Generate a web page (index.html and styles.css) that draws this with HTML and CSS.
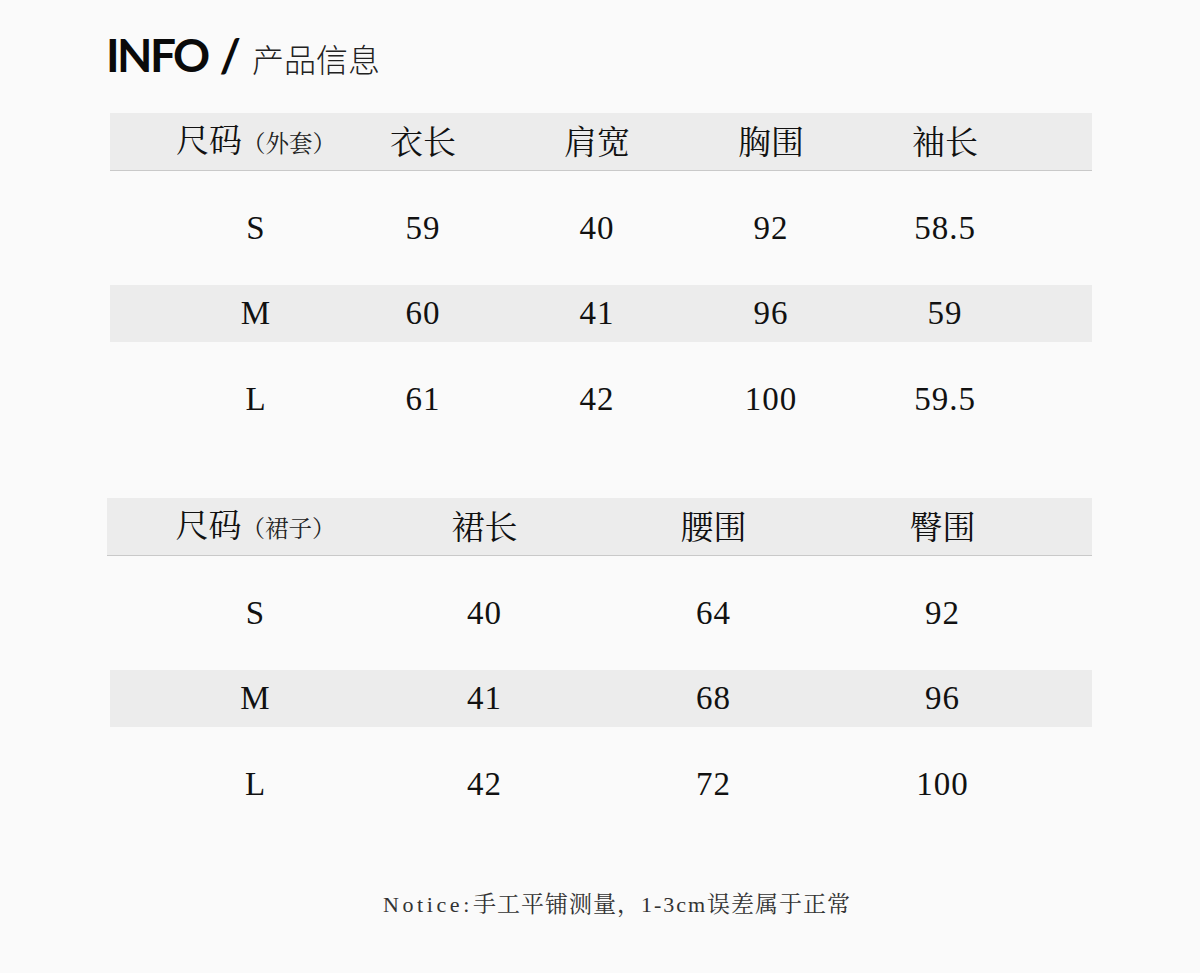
FILE: index.html
```html
<!DOCTYPE html>
<html lang="zh-CN">
<head>
<meta charset="utf-8">
<title>INFO / 产品信息</title>
<link rel="stylesheet" href="styles.css">
</head>
<body>
<main class="page">
  <h1 class="title"><span class="title-en">INFO</span><span class="title-slash">/</span><span class="title-cn">产品信息</span></h1>

  <section class="size-table coat">
    <div class="row head">
      <div class="cell">尺码<small>（外套）</small></div>
      <div class="cell">衣长</div>
      <div class="cell">肩宽</div>
      <div class="cell">胸围</div>
      <div class="cell">袖长</div>
    </div>
    <div class="row">
      <div class="cell num">S</div><div class="cell num">59</div><div class="cell num">40</div><div class="cell num">92</div><div class="cell num">58.5</div>
    </div>
    <div class="row shade">
      <div class="cell num">M</div><div class="cell num">60</div><div class="cell num">41</div><div class="cell num">96</div><div class="cell num">59</div>
    </div>
    <div class="row">
      <div class="cell num">L</div><div class="cell num">61</div><div class="cell num">42</div><div class="cell num">100</div><div class="cell num">59.5</div>
    </div>
  </section>

  <section class="size-table skirt">
    <div class="row head">
      <div class="cell">尺码<small>（裙子）</small></div>
      <div class="cell">裙长</div>
      <div class="cell">腰围</div>
      <div class="cell">臀围</div>
    </div>
    <div class="row">
      <div class="cell num">S</div><div class="cell num">40</div><div class="cell num">64</div><div class="cell num">92</div>
    </div>
    <div class="row shade">
      <div class="cell num">M</div><div class="cell num">41</div><div class="cell num">68</div><div class="cell num">96</div>
    </div>
    <div class="row">
      <div class="cell num">L</div><div class="cell num">42</div><div class="cell num">72</div><div class="cell num">100</div>
    </div>
  </section>

  <p class="notice"><span class="asc wide">Notice:</span><span class="cjk">手工平铺测量，</span><span class="asc">1-3cm</span><span class="cjk">误差属于正常</span></p>
</main>
</body>
</html>
```

FILE: styles.css
```css
html, body {
  margin: 0;
  padding: 0;
  background: #fafafa;
}

.page {
  width: 1200px;
  height: 973px;
  padding-top: 32px;
  box-sizing: border-box;
  color: #111;
  text-spacing-trim: space-all;
}

.title {
  margin: 0 0 0 106px;
  height: 46px;
  line-height: 46px;
  display: flex;
  align-items: baseline;
  font-weight: normal;
  white-space: nowrap;
}

.title-en {
  font-family: "Lato", "Open Sans", sans-serif;
  font-weight: 700;
  font-size: 46px;
  letter-spacing: -2.6px;
  color: #0a0a0a;
}

.title-slash {
  font-family: "Lato", "Open Sans", sans-serif;
  font-weight: 700;
  font-size: 46px;
  margin-left: 12px;
  color: #0a0a0a;
}

.title-cn {
  font-family: "Noto Sans CJK SC", sans-serif;
  font-weight: 300;
  font-size: 32px;
  margin-left: 11px;
  color: #222;
}

.size-table {
  margin-left: 110px;
  width: 982px;
}

.coat {
  margin-top: 35px;
}

.skirt {
  margin-top: 70.5px;
}

.row {
  display: grid;
  box-sizing: border-box;
  height: 57px;
  align-items: center;
  margin-top: 28.5px;
}

.coat .row {
  padding-left: 66px;
  grid-template-columns: 160px repeat(4, 174px);
}

.skirt .row {
  padding-left: 31px;
  grid-template-columns: repeat(4, 229px);
}

.row.head {
  margin-top: 0;
  height: 58px;
  background: #ececec;
  border-bottom: 1px solid #c9c9c9;
  padding-bottom: 7px;
}

.row.head .cell {
  line-height: 50px;
}

.skirt .row.head {
  margin-left: -3px;
  padding-left: 34px;
}

.row.shade {
  background: #ececec;
}

.cell {
  text-align: center;
  white-space: nowrap;
  font-family: "Noto Serif CJK SC", "Noto Sans CJK SC", serif;
  font-size: 33px;
  line-height: 57px;
  color: #111;
}

.cell small {
  font-size: 23.5px;
  color: #222;
}

.cell.num {
  font-family: "Liberation Serif", "Noto Serif CJK SC", serif;
  font-size: 33px;
  letter-spacing: 1px;
}

.notice {
  margin: 75px 0 0 0;
  padding-left: 34px;
  text-align: center;
  line-height: 30px;
  color: #333;
  white-space: nowrap;
}

.notice .asc {
  font-family: "Liberation Serif", serif;
  font-size: 22px;
  letter-spacing: 2px;
}

.notice .asc.wide {
  letter-spacing: 3.6px;
}

.notice .cjk {
  font-family: "Noto Serif CJK SC", "Noto Sans CJK SC", serif;
  font-size: 23px;
  letter-spacing: 1px;
}
```
